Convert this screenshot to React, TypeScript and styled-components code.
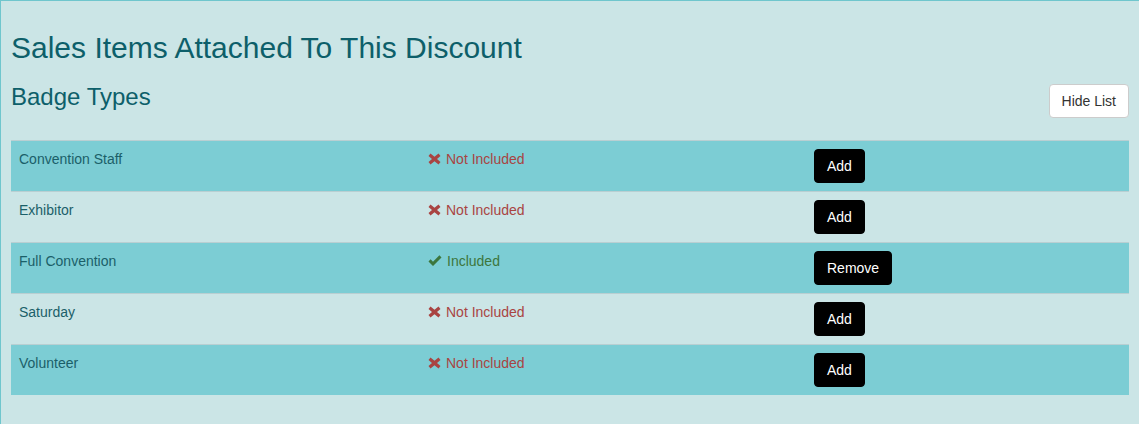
import styled, { createGlobalStyle } from "styled-components"

const GlobalStyle = createGlobalStyle`
  html, body {
    margin: 0;
    padding: 0;
    background: #cbe5e6;
  }
  body {
    font-family: "Liberation Sans", Arial, sans-serif;
    font-size: 14px;
    line-height: 1.42857;
    color: #0d5f6a;
  }
`

type Item = {
  name: string
  included: boolean
}

const items: Item[] = [
  { name: "Convention Staff", included: false },
  { name: "Exhibitor", included: false },
  { name: "Full Convention", included: true },
  { name: "Saturday", included: false },
  { name: "Volunteer", included: false },
]

const Panel = styled.div`
  border: 1px solid #6fc6cd;
  border-right: none;
  padding: 10px 10px 10px 10px;
  background: #cbe5e6;
  min-height: 420px;
`

const Title = styled.h2`
  margin: 20px 0 0 0;
  font-size: 30px;
  line-height: 33px;
  font-weight: 400;
  color: #0d5f6a;
`

const SectionHeader = styled.div`
  display: flex;
  justify-content: space-between;
  align-items: flex-start;
  margin-top: 20px;
`

const SubTitle = styled.h3`
  margin: 0;
  font-size: 24px;
  line-height: 26px;
  font-weight: 400;
  color: #0d5f6a;
`

const Button = styled.button<{ $variant?: "dark" | "light" }>`
  font-family: "Liberation Sans", Arial, sans-serif;
  font-size: 14px;
  line-height: 20px;
  padding: 6px 12px;
  border-radius: 4px;
  cursor: pointer;
  border: 1px solid ${p => (p.$variant === "light" ? "#cccccc" : "#000000")};
  background: ${p => (p.$variant === "light" ? "#ffffff" : "#000000")};
  color: ${p => (p.$variant === "light" ? "#333333" : "#ffffff")};
`

const Table = styled.div`
  margin-top: 22px;
  margin-bottom: 20px;
`

const Row = styled.div<{ $striped: boolean }>`
  display: grid;
  grid-template-columns: 409px 386px 1fr;
  border-top: 1px solid #b9cfd2;
  background: ${p => (p.$striped ? "#7ccdd4" : "#cbe5e6")};
`

const Cell = styled.div`
  padding: 8px;
  line-height: 20px;
  color: #1b5f69;
`

const Status = styled.span<{ $included: boolean }>`
  display: inline-flex;
  align-items: center;
  gap: 5px;
  color: ${p => (p.$included ? "#3c763d" : "#a94442")};
`

const CrossIcon = () => (
  <svg width="13" height="12" viewBox="0 0 13 12" aria-hidden="true">
    <path
      d="M0.5 3 L2.5 0.5 L6.5 3.8 L10.5 0.5 L12.5 3 L9 6 L12.5 9 L10.5 11.5 L6.5 8.2 L2.5 11.5 L0.5 9 L4 6 Z"
      fill="#a94442"
    />
  </svg>
)

const CheckIcon = () => (
  <svg width="14" height="12" viewBox="0 0 14 12" aria-hidden="true">
    <path d="M0.5 6.5 L2.6 4.3 L5 6.7 L11.4 0.3 L13.5 2.4 L5 11 Z" fill="#3c763d" />
  </svg>
)

const App = () => {
  return (
    <>
      <GlobalStyle />
      <Panel>
        <Title>Sales Items Attached To This Discount</Title>
        <SectionHeader>
          <SubTitle>Badge Types</SubTitle>
          <Button $variant="light">Hide List</Button>
        </SectionHeader>
        <Table>
          {items.map((item, i) => (
            <Row key={item.name} $striped={i % 2 === 0}>
              <Cell>{item.name}</Cell>
              <Cell>
                <Status $included={item.included}>
                  {item.included ? <CheckIcon /> : <CrossIcon />}
                  {item.included ? "Included" : "Not Included"}
                </Status>
              </Cell>
              <Cell>
                <Button>{item.included ? "Remove" : "Add"}</Button>
              </Cell>
            </Row>
          ))}
        </Table>
      </Panel>
    </>
  )
}

export default App
